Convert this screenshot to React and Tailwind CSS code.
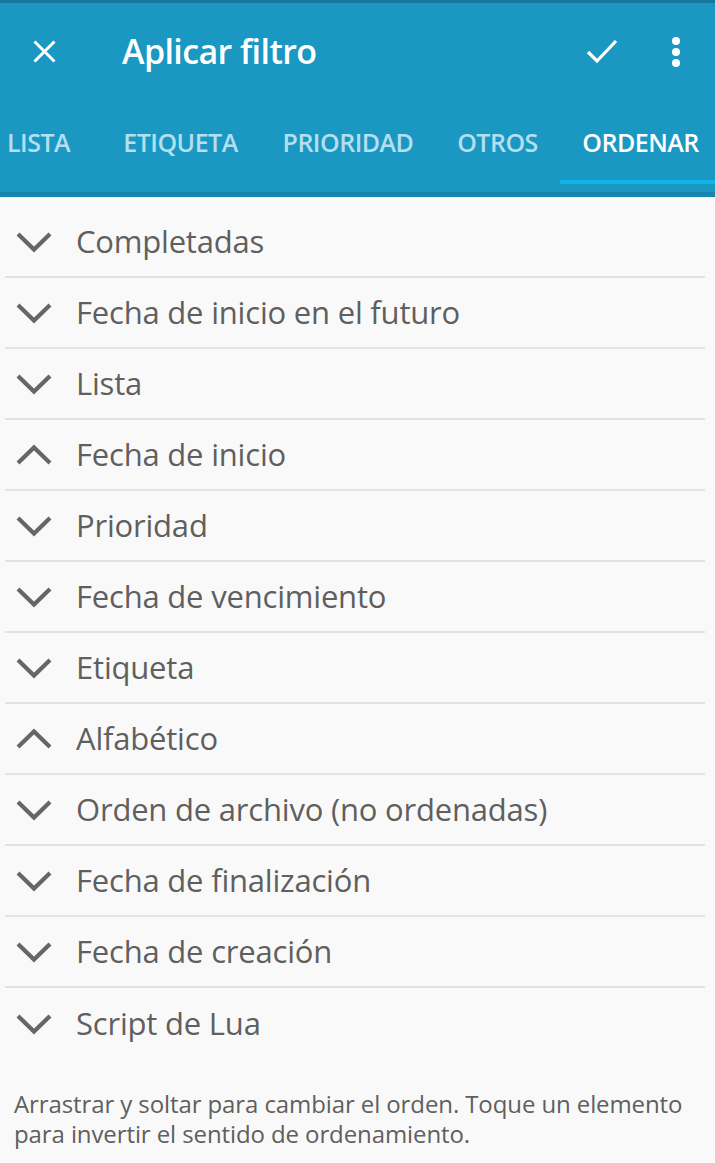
/**
 * Aplicar filtro - Ordenar tab
 */

const rows = [
    { label: 'Completadas', up: false },
    { label: 'Fecha de inicio en el futuro', up: false },
    { label: 'Lista', up: false },
    { label: 'Fecha de inicio', up: true },
    { label: 'Prioridad', up: false },
    { label: 'Fecha de vencimiento', up: false },
    { label: 'Etiqueta', up: false },
    { label: 'Alfabético', up: true },
    { label: 'Orden de archivo (no ordenadas)', up: false },
    { label: 'Fecha de finalización', up: false },
    { label: 'Fecha de creación', up: false },
    { label: 'Script de Lua', up: false },
];

const tabs = [
    { label: 'LISTA', w: 'w-[100px]', align: 'justify-start pl-[7px]' },
    { label: 'ETIQUETA', w: 'w-[161px]', align: 'justify-center' },
    { label: 'PRIORIDAD', w: 'w-[174px]', align: 'justify-center' },
    { label: 'OTROS', w: 'w-[125px]', align: 'justify-center' },
    { label: 'ORDENAR', w: 'w-[161px]', align: 'justify-center', active: true },
];

const Chevron = ({ up }) => (
    <svg width="36" height="22" viewBox="0 0 36 22" className="shrink-0">
        <path
            d={up ? 'M2 19 L18 3.5 L34 19' : 'M2 3 L18 18.5 L34 3'}
            fill="none"
            stroke="#666666"
            strokeWidth="4.2"
        />
    </svg>
);

const App = () => {
    return (
        <div className="w-[715px] h-[1163px] bg-[#f9f9f9] overflow-hidden" style={{ fontFamily: '"Open Sans", sans-serif' }}>
            {/* Toolbar */}
            <div className="bg-[#1a98c2] border-t-[3px] border-[#16789b]">
                <div className="h-[97px] flex items-center">
                    <div className="w-[122px] pl-[33px] flex items-center">
                        <svg width="23" height="23" viewBox="0 0 23 23">
                            <path d="M1.5 1.5 L21.5 21.5 M21.5 1.5 L1.5 21.5" stroke="white" strokeWidth="3" />
                        </svg>
                    </div>
                    <span className="text-white text-[34px] font-semibold tracking-[-0.6px] flex-1">Aplicar filtro</span>
                    <svg width="32" height="25" viewBox="0 0 32 25" className="mr-[54px]">
                        <path d="M2 13 L11 22 L30 2" fill="none" stroke="white" strokeWidth="3.2" />
                    </svg>
                    <div className="flex flex-col gap-[3px] mr-[35px]">
                        <span className="w-[8px] h-[8px] rounded-full bg-white" />
                        <span className="w-[8px] h-[8px] rounded-full bg-white" />
                        <span className="w-[8px] h-[8px] rounded-full bg-white" />
                    </div>
                </div>

                {/* Tabs */}
                <div className="flex h-[84px] overflow-hidden">
                    {tabs.map((t) => (
                        <div key={t.label} className={`${t.w} shrink-0 flex flex-col`}>
                            <div className={`flex-1 flex items-center pt-[6px] ${t.align}`}>
                                <span
                                    className={`text-[25px] font-semibold tracking-[-0.5px] ${t.active ? 'text-white' : 'text-[#b3dff0]'}`}
                                >
                                    {t.label}
                                </span>
                            </div>
                            <div className={`h-[4px] ${t.active ? 'bg-[#0db3ea]' : ''}`} />
                        </div>
                    ))}
                </div>
                <div className="h-[8px]" />
                <div className="h-[5px] bg-[#1786ad]" />
            </div>

            {/* Sort list */}
            <div className="pt-[10px] px-[5px]">
                {rows.map((r, i) => (
                    <div
                        key={r.label}
                        className={`h-[71px] flex items-center mr-[5px] ${i < rows.length - 1 ? 'border-b-2 border-[#e2e2e2]' : ''}`}
                    >
                        <div className="w-[71px] pl-[11px]">
                            <Chevron up={r.up} />
                        </div>
                        <span className="text-[31px] text-[#5f5f5f] font-medium tracking-[-0.2px]">{r.label}</span>
                    </div>
                ))}
            </div>

            <p className="px-[14px] pt-[30px] text-[24px] leading-[30px] text-[#5f5f5f] tracking-[-0.1px]">
                Arrastrar y soltar para cambiar el orden. Toque un elemento para invertir el sentido de ordenamiento.
            </p>
        </div>
    );
};

export default App;
